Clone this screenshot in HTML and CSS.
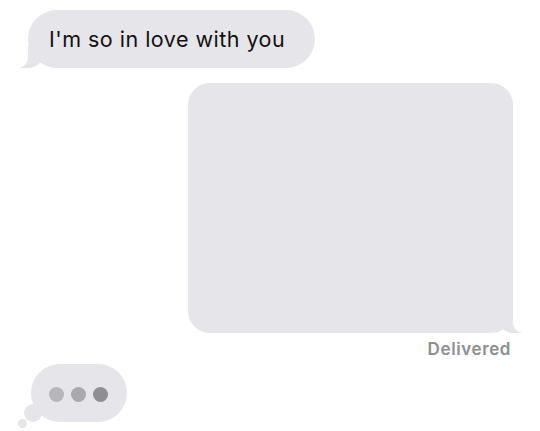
FILE: index.html
```html
<!DOCTYPE html>
<html>
<head>
<meta charset="utf-8">
<link rel="stylesheet" href="styles.css">
</head>
<body>
<div class="chat">
  <div class="bubble received">I'm so in love with you</div>
  <div class="bubble sent big"></div>
  <div class="status">Delivered</div>
  <div class="typing">
    <span class="dot d1"></span>
    <span class="dot d2"></span>
    <span class="dot d3"></span>
  </div>
</div>
</body>
</html>
```
FILE: styles.css
```css
html, body {
  margin: 0;
  padding: 0;
  background: #ffffff;
}
.chat {
  width: 540px;
  height: 431px;
  box-sizing: border-box;
  padding-top: 10px;
  display: flex;
  flex-direction: column;
  overflow: hidden;
  font-family: Inter, "Liberation Sans", sans-serif;
}
.bubble {
  position: relative;
  background: #e5e5ea;
}
.received {
  align-self: flex-start;
  margin-left: 28px;
  height: 58px;
  border-radius: 29px;
  padding: 0 30px 0 21px;
  display: flex;
  align-items: center;
  font-size: 21.5px;
  color: #111111;
  letter-spacing: 0.48px;
}
.received::before {
  content: "";
  position: absolute;
  bottom: 0;
  left: -10px;
  width: 26px;
  height: 22px;
  background: #e5e5ea;
  border-bottom-right-radius: 16px;
}
.received::after {
  content: "";
  position: absolute;
  bottom: 0;
  left: -26px;
  width: 26px;
  height: 22px;
  background: #ffffff;
  border-bottom-right-radius: 10px;
}
.big {
  align-self: flex-end;
  margin-top: 15px;
  margin-right: 27px;
  width: 325px;
  height: 250px;
  border-radius: 22px;
}
.sent::before {
  content: "";
  position: absolute;
  bottom: 0;
  right: -10px;
  width: 26px;
  height: 22px;
  background: #e5e5ea;
  border-bottom-left-radius: 16px;
}
.sent::after {
  content: "";
  position: absolute;
  bottom: 0;
  right: -26px;
  width: 26px;
  height: 22px;
  background: #ffffff;
  border-bottom-left-radius: 10px;
}
.status {
  align-self: flex-end;
  margin-top: 6px;
  margin-right: 29px;
  font-size: 17px;
  line-height: 20px;
  font-weight: 600;
  color: #8e8e93;
  letter-spacing: 0.6px;
}
.typing {
  position: relative;
  align-self: flex-start;
  margin-top: 5px;
  margin-left: 31px;
  width: 96px;
  height: 58px;
  box-sizing: border-box;
  border-radius: 29px;
  background: #e5e5ea;
  display: flex;
  align-items: center;
  padding-left: 18px;
  gap: 7px;
}
.typing::before {
  content: "";
  position: absolute;
  left: -7px;
  top: 40px;
  width: 18px;
  height: 18px;
  border-radius: 50%;
  background: #e5e5ea;
}
.typing::after {
  content: "";
  position: absolute;
  left: -13px;
  top: 55px;
  width: 9px;
  height: 9px;
  border-radius: 50%;
  background: #e5e5ea;
}
.dot {
  width: 15px;
  height: 15px;
  border-radius: 50%;
  margin-top: 2px;
}
.d1 { background: #b7b7bb; }
.d2 { background: #aaaaae; }
.d3 { background: #8f8f93; }
```
